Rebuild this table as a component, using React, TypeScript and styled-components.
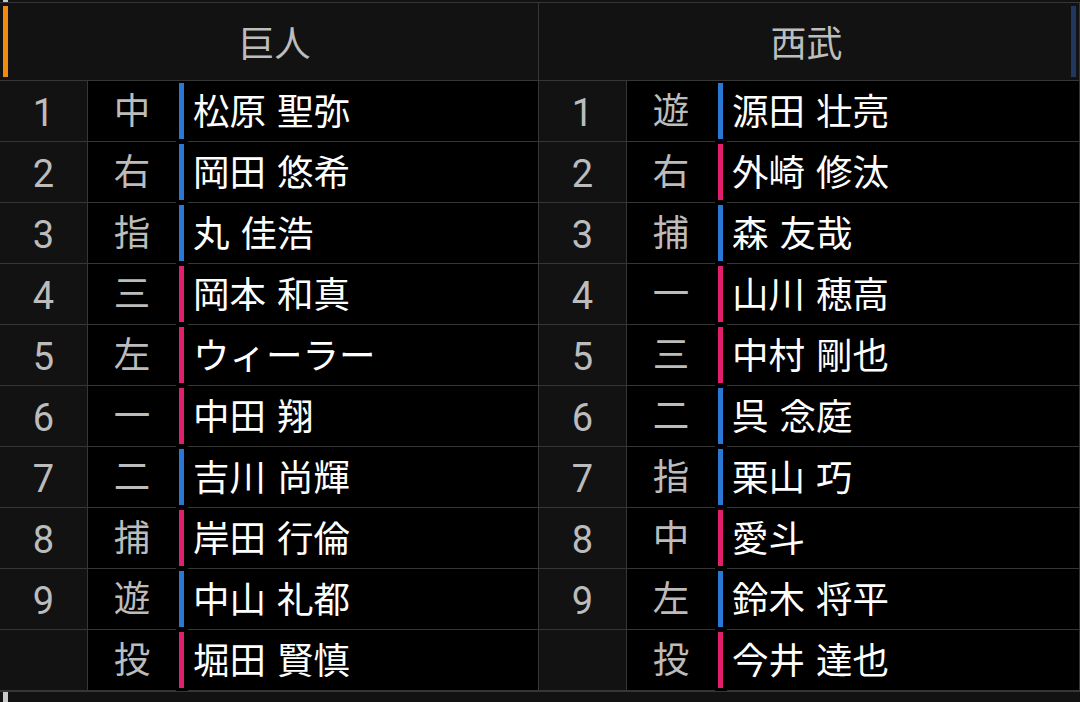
import React from "react";
import styled, { createGlobalStyle } from "styled-components";

const GlobalStyle = createGlobalStyle`
  html, body {
    margin: 0;
    padding: 0;
    background: #121212;
  }
  body {
    font-family: "Roboto", "Noto Sans CJK JP", "Noto Sans", sans-serif;
    width: 1080px;
    height: 702px;
    overflow: hidden;
  }
`;

type Hand = "R" | "L";

interface Player {
  order: string;
  pos: string;
  name: string;
  hand: Hand;
}

const giants: Player[] = [
  { order: "1", pos: "中", name: "松原 聖弥", hand: "L" },
  { order: "2", pos: "右", name: "岡田 悠希", hand: "L" },
  { order: "3", pos: "指", name: "丸 佳浩", hand: "L" },
  { order: "4", pos: "三", name: "岡本 和真", hand: "R" },
  { order: "5", pos: "左", name: "ウィーラー", hand: "R" },
  { order: "6", pos: "一", name: "中田 翔", hand: "R" },
  { order: "7", pos: "二", name: "吉川 尚輝", hand: "L" },
  { order: "8", pos: "捕", name: "岸田 行倫", hand: "R" },
  { order: "9", pos: "遊", name: "中山 礼都", hand: "L" },
  { order: "", pos: "投", name: "堀田 賢慎", hand: "R" },
];

const seibu: Player[] = [
  { order: "1", pos: "遊", name: "源田 壮亮", hand: "L" },
  { order: "2", pos: "右", name: "外崎 修汰", hand: "R" },
  { order: "3", pos: "捕", name: "森 友哉", hand: "L" },
  { order: "4", pos: "一", name: "山川 穂高", hand: "R" },
  { order: "5", pos: "三", name: "中村 剛也", hand: "R" },
  { order: "6", pos: "二", name: "呉 念庭", hand: "L" },
  { order: "7", pos: "指", name: "栗山 巧", hand: "L" },
  { order: "8", pos: "中", name: "愛斗", hand: "R" },
  { order: "9", pos: "左", name: "鈴木 将平", hand: "L" },
  { order: "", pos: "投", name: "今井 達也", hand: "R" },
];

const LINE = "#363636";

const Page = styled.div`
  display: flex;
  flex-direction: column;
  width: 1080px;
`;

const ScrollStrip = styled.div<{ $h: number }>`
  height: ${(p) => p.$h}px;
  display: flex;
  padding-left: 3px;
`;

const Thumb = styled.div`
  width: 5px;
  background: #c9c9c9;
`;

const Board = styled.div`
  display: grid;
  grid-template-columns: 539px 541px;
  border-top: 1px solid ${LINE};
  border-bottom: 1px solid ${LINE};
`;

const Panel = styled.div`
  display: flex;
  flex-direction: column;
  border-right: 1px solid ${LINE};
  background: #000;
`;

const Header = styled.div<{ $right?: boolean }>`
  height: 77px;
  border-bottom: 1px solid ${LINE};
  background: #121212;
  display: flex;
  flex-direction: ${(p) => (p.$right ? "row-reverse" : "row")};
  align-items: center;
  padding: 0 3px;
`;

const TeamBar = styled.div<{ $color: string }>`
  width: 5px;
  height: 71px;
  background: ${(p) => p.$color};
  flex: none;
`;

const TeamName = styled.div<{ $shift: number }>`
  flex: 1;
  text-align: center;
  color: #bdbdbd;
  font-family: "Noto Sans CJK JP", sans-serif;
  font-size: 36px;
  line-height: 1;
  padding-bottom: 2px;
  transform: translateX(${(p) => p.$shift}px);
`;

const Row = styled.div`
  display: grid;
  grid-template-columns: 88px 88px 12px 1fr;
  height: 61px;
`;

const Cell = styled.div`
  border-bottom: 1px solid ${LINE};
  display: flex;
  align-items: center;
  line-height: 1;
`;

const NumCell = styled(Cell)`
  background: #121212;
  border-right: 1px solid ${LINE};
  justify-content: center;
  color: #bcbcbc;
  font-family: "Roboto", sans-serif;
  font-size: 38px;
  padding-top: 3px;
`;

const PosCell = styled(Cell)`
  justify-content: center;
  color: #bcbcbc;
  font-family: "Noto Sans CJK JP", sans-serif;
  font-size: 36.5px;
  padding-bottom: 3px;
`;

const BarCell = styled.div`
  padding: 2px 3px 3px 3px;
  display: flex;
`;

const HandBar = styled.div<{ $hand: Hand }>`
  width: 5px;
  background: ${(p) => (p.$hand === "L" ? "#2a78d3" : "#e11f6d")};
`;

const NameCell = styled(Cell)`
  color: #ffffff;
  font-family: "Roboto", "Noto Sans CJK JP", sans-serif;
  font-size: 36.5px;
  padding-left: 5px;
  padding-top: 5px;
  white-space: nowrap;
  word-spacing: 2px;
`;

function Team({
  name,
  color,
  right,
  players,
}: {
  name: string;
  color: string;
  right?: boolean;
  players: Player[];
}) {
  return (
    <Panel>
      <Header $right={right}>
        <TeamBar $color={color} />
        <TeamName $shift={right ? 0 : 3}>{name}</TeamName>
      </Header>
      {players.map((p, i) => (
        <Row key={i}>
          <NumCell>{p.order}</NumCell>
          <PosCell>{p.pos}</PosCell>
          <BarCell>
            <HandBar $hand={p.hand} />
          </BarCell>
          <NameCell>{p.name}</NameCell>
        </Row>
      ))}
    </Panel>
  );
}

export default function App() {
  return (
    <>
      <GlobalStyle />
      <Page>
        <ScrollStrip $h={2}>
          <Thumb />
        </ScrollStrip>
        <Board>
          <Team name="巨人" color="#f38a0b" players={giants} />
          <Team name="西武" color="#22375f" right players={seibu} />
        </Board>
        <ScrollStrip $h={10}>
          <Thumb />
        </ScrollStrip>
      </Page>
    </>
  );
}
